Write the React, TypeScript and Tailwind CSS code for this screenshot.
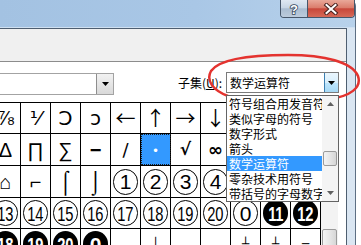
import React from "react";

type Cell =
  | { k: "g"; ch: string; c: string }
  | { k: "o"; n: string; black?: boolean }
  | { k: "sel" }
  | { k: "e" };

const LS = "text-[20px] font-['Liberation_Sans','DejaVu_Sans',sans-serif]";
const DV = "text-[20px] font-['DejaVu_Sans',sans-serif]";
const CJ = "text-[20px] font-['Noto_Sans_CJK_SC',sans-serif]";
const BX = "text-[12px] font-['DejaVu_Sans_Mono',monospace]";

const g = (ch: string, c: string): Cell => ({ k: "g", ch, c });
const o = (n: string, black = false): Cell => ({ k: "o", n, black });
const E: Cell = { k: "e" };

const rows: { h: string; cells: Cell[] }[] = [
  {
    h: "h-[31px]",
    cells: [g("⅞", LS), g("⅟", DV), g("Ↄ", DV), g("ↄ", DV), g("←", CJ), g("↑", CJ), g("→", CJ), g("↓", CJ), E, E, E],
  },
  {
    h: "h-[32px]",
    cells: [
      g("Δ", LS),
      g("∏", LS),
      g("∑", LS),
      g("−", "text-[20px] font-bold font-['Liberation_Sans',sans-serif]"),
      g("∕", "text-[18px] font-['DejaVu_Sans',sans-serif]"),
      { k: "sel" },
      g("√", "text-[17px] font-bold font-['DejaVu_Sans',sans-serif]"),
      g("∞", "text-[18px] font-bold font-['DejaVu_Sans',sans-serif]"),
      E,
      E,
      E,
    ],
  },
  {
    h: "h-[32px]",
    cells: [
      g("⌂", LS),
      g("⌐", "text-[20px] font-bold font-['Liberation_Sans',sans-serif]"),
      g("⌠", "text-[22px] font-['Liberation_Sans',sans-serif]"),
      g("⌡", "text-[22px] font-['Liberation_Sans',sans-serif]"),
      o("1"),
      o("2"),
      o("3"),
      o("4"),
      E,
      E,
      E,
    ],
  },
  {
    h: "h-[31px]",
    cells: [o("13"), o("14"), o("15"), o("16"), o("17"), o("18"), o("19"), o("20"), o("0"), o("11", true), o("12", true)],
  },
  {
    h: "h-[31px]",
    cells: [o("18", true), o("19", true), o("20", true), o("0", true), E, g("│", BX), E, E, g("┴", BX), g("┴", BX), g("─", BX)],
  },
];

function Circled({ n, black }: { n: string; black?: boolean }) {
  const two = n.length > 1;
  return (
    <div
      className={
        black
          ? "w-[25px] h-[26px] rounded-full bg-black flex items-center justify-center"
          : "w-[25px] h-[26px] rounded-full border border-black bg-white flex items-center justify-center"
      }
    >
      <span
        className={
          (black ? "text-white font-bold " : "text-black ") +
          (two
            ? "inline-block scale-x-[0.7] text-[21px] leading-none tracking-[-0.5px] font-['Liberation_Sans',sans-serif]"
            : "inline-block text-[21px] leading-none font-['Liberation_Sans',sans-serif]")
        }
      >
        {n}
      </span>
    </div>
  );
}

function GridCell({ cell }: { cell: Cell }) {
  if (cell.k === "sel") {
    return (
      <div className="w-[30px] shrink-0 h-full border-r border-black bg-[#3399ff] outline-1 outline-dotted outline-[#1a1a1a] -outline-offset-1 flex items-center justify-center">
        <span className="text-white text-[12px] leading-none font-['DejaVu_Sans',sans-serif]">∙</span>
      </div>
    );
  }
  return (
    <div className="w-[30px] shrink-0 h-full border-r border-black bg-white flex items-center justify-center overflow-visible">
      {cell.k === "g" && <span className={"leading-none text-black " + cell.c}>{cell.ch}</span>}
      {cell.k === "o" && <Circled n={cell.n} black={cell.black} />}
    </div>
  );
}

const items = ["符号组合用发音符", "类似字母的符号", "数字形式", "箭头", "数学运算符", "零杂技术用符号", "带括号的字母数字"];

function Tri({ color = "#000" }: { color?: string }) {
  return (
    <svg width="7" height="4" viewBox="0 0 7 4">
      <path d="M0 0H7L3.5 4Z" fill={color} />
    </svg>
  );
}

export default function App() {
  return (
    <div className="relative w-[361px] h-[245px] overflow-hidden bg-white font-['Noto_Sans_CJK_SC',sans-serif] text-black">
      <div className="flex flex-col w-[356px] h-full border-r border-[#5d6f83] rounded-tr-[6px] bg-[#dae6f2]">
        {/* title bar */}
        <div className="h-[28px] shrink-0 flex justify-end border-b border-[#cfe0f1] bg-[linear-gradient(to_right,#a3c2e2,#a9c7e6_55%,#b8d2eb)]">
          <div className="flex h-[18px] border-x border-b border-[#46566a] rounded-b-[4px] overflow-hidden">
            <div className="w-[27px] h-full border-r border-[#46566a] bg-[linear-gradient(to_bottom,#dfe8f2_0%,#c8d6e5_45%,#aabdd1_52%,#bccbdc_100%)] flex items-center justify-center">
              <svg width="12" height="14" viewBox="0 0 12 14">
                <text x="6" y="12" textAnchor="middle" fontSize="13" fontWeight="bold" fontFamily="Liberation Sans, sans-serif" fill="#ffffff" stroke="#34465a" strokeWidth="1.6" paintOrder="stroke">?</text>
              </svg>
            </div>
            <div className="w-[46px] h-full bg-[linear-gradient(to_bottom,#e9a899_0%,#db7d6c_45%,#c8473a_52%,#d66a58_100%)] flex items-center justify-center">
              <svg width="16" height="12" viewBox="0 0 16 12">
                <path d="M3.5 2L12.5 10M12.5 2L3.5 10" stroke="#4a2420" strokeWidth="4" strokeLinecap="square" />
                <path d="M3.5 2L12.5 10M12.5 2L3.5 10" stroke="#ffffff" strokeWidth="2" strokeLinecap="square" />
              </svg>
            </div>
          </div>
        </div>
        {/* body */}
        <div className="flex-1 flex">
          <div className="w-[347px] shrink-0 flex flex-col border-t border-r border-[#4e5e70] bg-[#f0f0f0] pt-[32px]">
            <div className="flex-1 flex flex-col bg-white border-t border-[#8c8c8c]">
              {/* combo row */}
              <div className="mt-[10px] h-[23px] flex items-start">
                <div className="mt-[1px] w-[114px] h-[22px] shrink-0 flex justify-end border-y border-r border-[#a3a3a3] bg-white">
                  <div className="w-[17px] h-full border-l border-[#8e8e8e] bg-[linear-gradient(to_bottom,#f2f2f2,#d9d9d9)] flex items-center justify-center">
                    <Tri />
                  </div>
                </div>
                <div className="ml-[64px] w-[48px] h-[21px] shrink-0 flex items-center text-[12px] leading-none whitespace-nowrap">
                  子集(<span className="underline underline-offset-1">U</span>):
                </div>
                <div className="relative w-[113px] h-[21px] shrink-0 flex border border-[#7b7b7b] bg-white">
                  <div className="flex-1 pl-[3px] text-[12px] leading-[19px] whitespace-nowrap">数学运算符</div>
                  <div className="w-[14px] h-full border-l border-[#3c7fb1] bg-[linear-gradient(to_bottom,#eaf6fd,#d9effc_50%,#bee6fd_51%,#a7d9f5)] flex items-center justify-center">
                    <Tri />
                  </div>
                  {/* dropdown list */}
                  <div className="absolute left-[-1px] top-[22px] z-20 w-[113px] h-[107px] flex border border-[#646464] bg-white">
                    <div className="w-[95px] shrink-0 flex flex-col overflow-hidden">
                      {items.map((t, i) => (
                        <div
                          key={t}
                          className={
                            i === 4
                              ? "h-[15px] shrink-0 pl-[2px] text-[12px] leading-[15px] whitespace-nowrap bg-[#3399ff] text-white"
                              : "h-[15px] shrink-0 pl-[2px] text-[12px] leading-[15px] whitespace-nowrap text-black"
                          }
                        >
                          {t}
                        </div>
                      ))}
                    </div>
                    <div className="w-[16px] shrink-0 flex flex-col bg-[#f4f4f4]">
                      <div className="h-[16px] flex items-center justify-center">
                        <svg width="7" height="4" viewBox="0 0 7 4">
                          <path d="M3.5 0L7 4H0Z" fill="#606060" />
                        </svg>
                      </div>
                      <div className="mt-[39px] mx-[1px] h-[15px] rounded-[2px] border border-[#9b9b9b] bg-[linear-gradient(to_right,#f3f3f3,#e6e6e6_50%,#d6d6d6)]" />
                      <div className="flex-1" />
                      <div className="h-[16px] flex items-center justify-center">
                        <Tri color="#606060" />
                      </div>
                    </div>
                  </div>
                </div>
              </div>
              {/* grid row */}
              <div className="mt-[7px] flex">
                <div className="-ml-[9px] w-[330px] shrink-0 flex flex-col border-t border-black">
                  {rows.map((r, ri) => (
                    <div key={ri} className={"flex shrink-0 border-b border-black " + r.h}>
                      {r.cells.map((c, ci) => (
                        <GridCell key={ci} cell={c} />
                      ))}
                    </div>
                  ))}
                </div>
                <div className="w-[17px] shrink-0 flex flex-col bg-[#f3f3f3]">
                  <div className="h-[17px] shrink-0" />
                  <div className="h-[110px] shrink-0" />
                  <div className="mx-[1px] h-[40px] shrink-0 rounded-[2px] border border-[#9b9b9b] bg-[linear-gradient(to_right,#f4f4f4,#e7e7e7_50%,#d7d7d7)]" />
                </div>
              </div>
            </div>
          </div>
        </div>
      </div>
      {/* red annotation ellipse */}
      <svg className="absolute left-0 top-0 z-10 pointer-events-none" width="361" height="245" viewBox="0 0 361 245">
        <path
          d="M228 96 C212 90 206 80 211 71 C220 58 255 55 288 55 C325 55 352 62 358 76 C362 88 350 96 330 99 C300 103 250 101 228 96 Z"
          fill="none"
          stroke="#e4332f"
          strokeWidth="2.5"
        />
      </svg>
    </div>
  );
}
